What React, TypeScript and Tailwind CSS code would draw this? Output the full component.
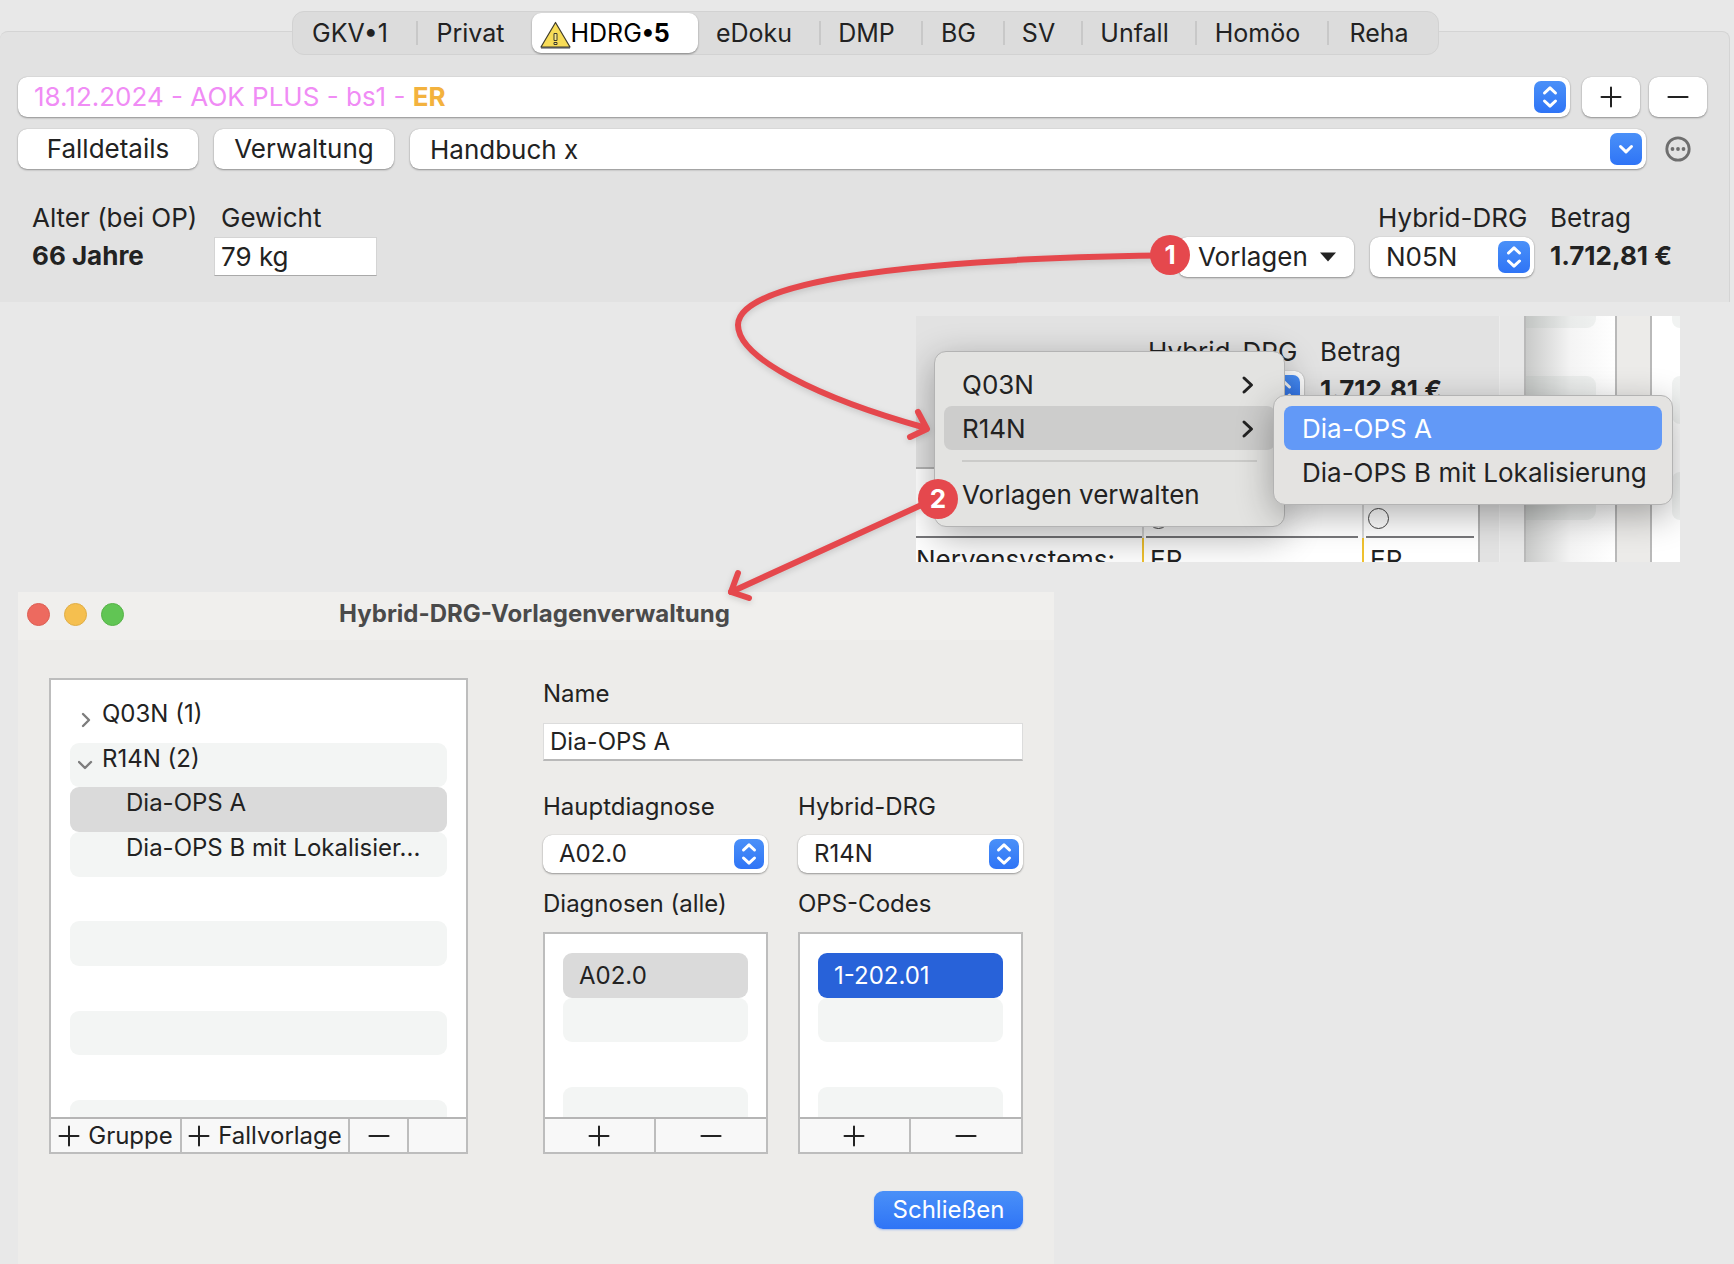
import React, { useId, useState } from 'react';
import clsx from 'clsx';

const TABS = [
  { id: 'gkv', label: 'GKV•1', width: 'w-[125px]' },
  { id: 'privat', label: 'Privat', width: 'w-[114px]' },
  { id: 'hdrg', label: 'HDRG', count: '5', width: 'w-[166px]' },
  { id: 'edoku', label: 'eDoku', width: 'w-[123px]' },
  { id: 'dmp', label: 'DMP', width: 'w-[102px]' },
  { id: 'bg', label: 'BG', width: 'w-[82px]' },
  { id: 'sv', label: 'SV', width: 'w-[78px]' },
  { id: 'unfall', label: 'Unfall', width: 'w-[114px]' },
  { id: 'homoeo', label: 'Homöo', width: 'w-[132px]' },
  { id: 'reha', label: 'Reha', width: 'w-[109px]' },
];

const CONTROL = 'rounded-[9px] bg-white shadow-[0_1px_2px_rgba(0,0,0,0.35),0_0_1px_rgba(0,0,0,0.25)]';

function UpDownIcon({ className }: { className?: string }) {
  return (
    <span
      className={clsx(
        'pointer-events-none absolute flex items-center justify-center rounded-[7px] bg-linear-to-b from-[#4a90f8] to-[#2f74f6] text-white',
        className
      )}
    >
      <svg width="16" height="24" viewBox="0 0 16 24" fill="none" stroke="currentColor" strokeWidth="3" strokeLinecap="round" strokeLinejoin="round">
        <path d="M2.500 8 8 2.800l5.500 5.200M2.500 16 8 21.200l5.500-5.200" />
      </svg>
    </span>
  );
}

function PlusIcon() {
  return (
    <svg width="22" height="22" viewBox="0 0 22 22" stroke="currentColor" strokeWidth="2" strokeLinecap="round" aria-hidden="true">
      <path d="M11 1.500v19M1.500 11h19" />
    </svg>
  );
}

function MinusIcon() {
  return (
    <svg width="22" height="22" viewBox="0 0 22 22" stroke="currentColor" strokeWidth="2.200" strokeLinecap="round" aria-hidden="true">
      <path d="M1.500 11h19" />
    </svg>
  );
}

function WarningIcon() {
  return (
    <svg width="31" height="28" viewBox="0 0 31 28" className="mt-1 shrink-0" aria-hidden="true">
      <path d="M15.500 1.500 30 26H1Z" fill="#f8dc57" stroke="#3f3c2c" strokeWidth="1.200" strokeLinejoin="round" />
      <path d="M1 26.800h29" stroke="#555" strokeWidth="1.500" />
      <path d="M14 12.500h3v7h-3ZM14 21.500h3v2h-3Z" fill="#fbe98c" stroke="#3f3c2c" strokeWidth="1" />
    </svg>
  );
}

function MenuChevron() {
  return (
    <svg width="14" height="22" viewBox="0 0 14 22" fill="none" stroke="currentColor" strokeWidth="3" strokeLinecap="round" strokeLinejoin="round" aria-hidden="true">
      <path d="M3 4l7.500 7L3 18" />
    </svg>
  );
}

// Hybrid-DRG select next to the resulting amount
function DrgFields({ className }: { className?: string }) {
  const id = useId();
  return (
    <div className={clsx('flex', className)}>
      <div className="w-[164px] shrink-0">
        <label htmlFor={id} className="mb-1 block pl-2 whitespace-nowrap">
          Hybrid-DRG
        </label>
        <div className="relative">
          <select id={id} className={clsx('h-10 w-full appearance-none pl-4', CONTROL)}>
            <option>N05N</option>
          </select>
          <UpDownIcon className="top-1 right-1 h-8 w-8" />
        </div>
      </div>
      <div className="w-[173px] shrink-0 pl-4">
        <div className="mb-1">Betrag</div>
        <div className="leading-[38px] font-bold whitespace-nowrap">1.712,81 €</div>
      </div>
    </div>
  );
}

function CasePanel() {
  const [active, setActive] = useState('hdrg');

  return (
    <section className="mr-1 pt-[11px]">
      <div
        role="tablist"
        className="relative z-10 mx-auto flex h-11 w-fit items-center rounded-xl border border-[#d2d2d2] bg-[#dcdcdc] text-[25px]"
      >
        {TABS.map((tab, i) => {
          const selected = tab.id === active;
          const divider = i < TABS.length - 1 && !selected && TABS[i + 1].id !== active;
          return (
            <button
              key={tab.id}
              type="button"
              role="tab"
              aria-selected={selected}
              onClick={() => setActive(tab.id)}
              className={clsx(
                'flex items-center',
                tab.width,
                selected
                  ? 'h-10 rounded-[9px] bg-white pl-2 text-black shadow-[0_1px_2px_rgba(0,0,0,0.4)]'
                  : 'h-6 justify-center pr-2',
                divider && 'border-r-2 border-[#c8c8c8]'
              )}
            >
              {tab.id === 'hdrg' && <WarningIcon />}
              {tab.label}
              {tab.count && <b>•{tab.count}</b>}
            </button>
          );
        })}
      </div>

      <div className="-mt-6 rounded-t-lg border-t border-r border-[#d4d4d4] bg-[#e2e2e2] pt-[45px] pr-[22px] pb-[25px] pl-[18px]">
        <div className="flex">
          <div className="relative flex-1">
            <select aria-label="Fall" className={clsx('h-10 w-full appearance-none text-transparent', CONTROL)}>
              <option>18.12.2024 - AOK PLUS - bs1 - ER</option>
            </select>
            <span aria-hidden="true" className="pointer-events-none absolute inset-y-0 left-4 leading-10 text-[#f08cf5]">
              18.12.2024 - AOK PLUS - bs1 - <b className="text-[#f3b23e]">ER</b>
            </span>
            <UpDownIcon className="top-1 right-1 h-8 w-8" />
          </div>
          <button type="button" aria-label="Hinzufügen" className={clsx('ml-3 flex h-10 w-[58px] items-center justify-center', CONTROL)}>
            <PlusIcon />
          </button>
          <button type="button" aria-label="Entfernen" className={clsx('ml-[9px] flex h-10 w-[58px] items-center justify-center', CONTROL)}>
            <MinusIcon />
          </button>
        </div>

        <div className="mt-3 flex items-center">
          <button type="button" className={clsx('h-10 w-[180px]', CONTROL)}>
            Falldetails
          </button>
          <button type="button" className={clsx('ml-4 h-10 w-[180px]', CONTROL)}>
            Verwaltung
          </button>
          <div className="relative ml-4 flex-1">
            <input aria-label="Fallname" defaultValue="Handbuch x" className={clsx('h-10 w-full pl-5 outline-none', CONTROL)} />
            <button
              type="button"
              aria-label="Auswahl öffnen"
              className="absolute top-1 right-1 flex h-8 w-8 items-center justify-center rounded-[7px] bg-linear-to-b from-[#4a90f8] to-[#2f74f6] text-white"
            >
              <svg width="16" height="12" viewBox="0 0 16 12" fill="none" stroke="currentColor" strokeWidth="3" strokeLinecap="round" strokeLinejoin="round">
                <path d="M2.500 3.500 8 8.800l5.500-5.300" />
              </svg>
            </button>
          </div>
          <button type="button" aria-label="Mehr" className="mr-4 ml-[19px] text-[#6e6e6e]">
            <svg width="26" height="26" viewBox="0 0 26 26" fill="currentColor">
              <circle cx="13" cy="13" r="11.200" fill="none" stroke="currentColor" strokeWidth="2.800" />
              <circle cx="7.500" cy="13" r="1.900" />
              <circle cx="13" cy="13" r="1.900" />
              <circle cx="18.500" cy="13" r="1.900" />
            </svg>
          </button>
        </div>

        <div className="mt-[34px] flex pl-[14px]">
          <div className="w-[182px]">
            <div className="mb-1 whitespace-nowrap">Alter (bei OP)</div>
            <div className="leading-[38px] font-bold">66 Jahre</div>
          </div>
          <div>
            <label htmlFor="gewicht" className="mb-1 block pl-[7px]">
              Gewicht
            </label>
            <input
              id="gewicht"
              defaultValue="79 kg"
              className="h-[39px] w-[163px] border border-b-[#a9a9a9] border-[#d4d4d4] bg-white pl-1.5 outline-none"
            />
          </div>
          <button
            type="button"
            aria-haspopup="menu"
            className={clsx('mt-[34px] ml-auto flex h-10 w-[176px] items-center pl-5', CONTROL)}
          >
            Vorlagen
            <svg width="16" height="10" viewBox="0 0 16 10" className="ml-3 fill-[#222]" aria-hidden="true">
              <path d="M0 .5h16L8 9.500Z" />
            </svg>
          </button>
          <DrgFields className="ml-4" />
        </div>
      </div>
    </section>
  );
}

function MenuSnippet() {
  return (
    <section className="relative mt-[14px] mr-[54px] ml-auto flex h-[246px] w-[764px] overflow-hidden">
      <div className="w-[584px] border-r border-[#ececec] bg-[#e2e2e2]">
        <div className="flex h-[151px] pt-[21px] pl-[224px]">
          <DrgFields />
        </div>
        <div className="grid w-[564px] grid-cols-[226px_220px_116px] border-t-2 border-r-2 border-[#b4b4b4] bg-white">
          <div className="h-[69px] border-b-2 border-[#77777a]" />
          <div className="h-[69px] border-l-2 border-[#d8d8d8]">
            <div className="mr-1 ml-0.5 h-full border-b-2 border-[#77777a] pt-[39px] pl-0.5">
              <input type="radio" name="er" aria-label="ER 1" className="block size-[21px] appearance-none rounded-full border border-[#444]" />
            </div>
          </div>
          <div className="h-[69px] border-l-2 border-[#d8d8d8]">
            <div className="mr-1 ml-0.5 h-full border-b-2 border-[#77777a] pt-[39px] pl-0.5">
              <input type="radio" name="er" aria-label="ER 2" className="block size-[21px] appearance-none rounded-full border border-[#444]" />
            </div>
          </div>
          <div className="h-8 pt-[7px]">Nervensystems:</div>
          <div className="h-8 border-l-2 border-[#efc12f] pt-[7px] pl-1.5">ER</div>
          <div className="h-8 border-l-2 border-[#efc12f] pt-[7px] pl-1.5">ER</div>
        </div>
      </div>
      <div className="w-6 bg-[#e7e7e7]" />
      <div className="flex w-[93px] flex-col gap-12 border-x-2 border-[#b9b9b9] bg-linear-to-r from-[#c9cac9] via-[#f4f4f4] to-white">
        <div className="h-3 w-[70px] rounded-br-[9px] bg-[#8b9b96]/10" />
        <div className="h-12 w-[70px] rounded-r-[9px] bg-[#8b9b96]/10" />
        <div className="h-12 w-[70px] rounded-r-[9px] bg-[#8b9b96]/10" />
      </div>
      <div className="w-[33px] bg-[#ecebe9]" />
      <div className="flex flex-1 flex-col items-end gap-12 border-l-2 border-[#b9b9b9] bg-white">
        <div className="h-3 w-2 rounded-bl-lg bg-[#f1f3f2]" />
        <div className="h-12 w-2 rounded-l-lg bg-[#f1f3f2]" />
        <div className="h-12 w-2 rounded-l-lg bg-[#f1f3f2]" />
      </div>

      <div
        role="menu"
        aria-label="Vorlagen"
        className="absolute top-[35px] left-[18px] w-[351px] rounded-xl border border-[#b3b3b3] bg-[#e3e3e1] px-[9px] py-[10px] shadow-[0_10px_36px_rgba(0,0,0,0.32)]"
      >
        <button type="button" role="menuitem" className="flex h-11 w-full items-center justify-between pt-0.5 pr-5 pl-[18px]">
          Q03N
          <MenuChevron />
        </button>
        <button type="button" role="menuitem" className="flex h-11 w-full items-center justify-between rounded-lg bg-[#cdcdcc] pt-0.5 pr-5 pl-[18px]">
          R14N
          <MenuChevron />
        </button>
        <div className="mx-[18px] my-[10px] h-0.5 bg-[#cbcbc9]" />
        <button type="button" role="menuitem" className="flex h-11 w-full items-center pt-0.5 pl-[18px] whitespace-nowrap">
          Vorlagen verwalten
        </button>
      </div>
      <div
        role="menu"
        aria-label="R14N"
        className="absolute top-[79px] left-[357px] w-[400px] rounded-xl border border-[#b3b3b3] bg-[#e4e3e1] px-[10px] py-[10px] shadow-[0_10px_36px_rgba(0,0,0,0.32)]"
      >
        <button type="button" role="menuitem" className="flex h-11 w-full items-center rounded-lg bg-[#6299f7] pt-0.5 pl-[18px] text-white">
          Dia-OPS A
        </button>
        <button type="button" role="menuitem" className="flex h-11 w-full items-center pt-0.5 pl-[18px] whitespace-nowrap">
          Dia-OPS B mit Lokalisierung
        </button>
      </div>
    </section>
  );
}

function DialogSelect({ label, value }: { label: string; value: string }) {
  const id = useId();
  return (
    <div>
      <label htmlFor={id} className="block">
        {label}
      </label>
      <div className="relative mt-[14px]">
        <select id={id} className={clsx('h-[38px] w-full appearance-none pl-4', CONTROL)}>
          <option>{value}</option>
        </select>
        <UpDownIcon className="top-1 right-1 h-[30px] w-[30px]" />
      </div>
    </div>
  );
}

interface CodeListProps {
  label: string;
  code: string;
  focused?: boolean;
}

function CodeList({ label, code, focused }: CodeListProps) {
  return (
    <div>
      <div>{label}</div>
      <div className="mt-[14px] border-2 border-[#bdbdbd] bg-white">
        <ul className="grid h-[183px] grid-rows-[19px_repeat(3,minmax(0,1fr))_30px] px-[18px]">
          <li />
          <li className={clsx('rounded-[9px] pl-4 leading-[46px]', focused ? 'bg-[#2862d9] text-white' : 'bg-[#dadada]')}>{code}</li>
          <li className="rounded-[9px] bg-[#f3f5f4]" />
          <li />
          <li className="rounded-t-[9px] bg-[#f3f5f4]" />
        </ul>
        <div className="grid h-[35px] grid-cols-2 border-t-2 border-[#b5b5b5] bg-[#f8f8f8]">
          <button type="button" aria-label={label + ' hinzufügen'} className="flex items-center justify-center border-r-2 border-[#bdbdbd]">
            <PlusIcon />
          </button>
          <button type="button" aria-label={label + ' entfernen'} className="flex items-center justify-center">
            <MinusIcon />
          </button>
        </div>
      </div>
    </div>
  );
}

function TemplateTree() {
  return (
    <div className="w-[419px] border-2 border-[#bdbdbd] bg-white">
      <ul className="grid h-[437px] grid-rows-[18px_repeat(9,minmax(0,1fr))_17px] px-[19px]">
        <li />
        <li className="flex gap-2 pl-2">
          <svg width="16" height="16" viewBox="0 0 16 16" fill="none" stroke="#7d7d7d" strokeWidth="2.400" strokeLinecap="round" strokeLinejoin="round" className="mt-[14px]">
            <path d="M5 2l6 6-6 6" />
          </svg>
          <span className="leading-8">Q03N (1)</span>
        </li>
        <li className="flex gap-2 rounded-[9px] bg-[#f3f5f4] pl-2">
          <svg width="16" height="16" viewBox="0 0 16 16" fill="none" stroke="#7d7d7d" strokeWidth="2.400" strokeLinecap="round" strokeLinejoin="round" className="mt-[14px]">
            <path d="M1 5l6 6 6-6" />
          </svg>
          <span className="leading-8">R14N (2)</span>
        </li>
        <li className="rounded-[9px] bg-[#dadada] pl-14 leading-8">Dia-OPS A</li>
        <li className="rounded-[9px] bg-[#f3f5f4] pl-14 leading-8 whitespace-nowrap">Dia-OPS B mit Lokalisier...</li>
        <li />
        <li className="rounded-[9px] bg-[#f3f5f4]" />
        <li />
        <li className="rounded-[9px] bg-[#f3f5f4]" />
        <li />
        <li className="rounded-t-[9px] bg-[#f3f5f4]" />
      </ul>
      <div className="grid h-[35px] grid-cols-[131px_168px_59px_1fr] border-t-2 border-[#b5b5b5] bg-[#f8f8f8]">
        <button type="button" className="flex items-center justify-center gap-2 border-r-2 border-[#bdbdbd]">
          <PlusIcon />
          Gruppe
        </button>
        <button type="button" className="flex items-center justify-center gap-2 border-r-2 border-[#bdbdbd]">
          <PlusIcon />
          Fallvorlage
        </button>
        <button type="button" aria-label="Entfernen" className="flex items-center justify-center border-r-2 border-[#bdbdbd]">
          <MinusIcon />
        </button>
      </div>
    </div>
  );
}

function TemplateDialog() {
  return (
    <section
      role="dialog"
      aria-labelledby="dialog-title"
      className="mt-[30px] ml-[18px] w-[1036px] bg-[#edecea] pb-[35px] text-[24px] leading-7"
    >
      <header className="grid h-12 grid-cols-[1fr_auto_1fr] items-center bg-[#f0efed] pr-3 pb-1 pl-[9px]">
        <div className="flex gap-[14px]">
          <span className="size-[23px] rounded-full border border-[#dd5f54] bg-[#ed6a5f]" />
          <span className="size-[23px] rounded-full border border-[#e0ae46] bg-[#f5bf4f]" />
          <span className="size-[23px] rounded-full border border-[#56b347] bg-[#61c554]" />
        </div>
        <h2 id="dialog-title" className="font-bold text-[#4a4a4a]">
          Hybrid-DRG-Vorlagenverwaltung
        </h2>
      </header>

      <div className="flex justify-between pt-[38px] pr-[31px] pl-[31px]">
        <TemplateTree />
        <div className="w-[480px] pt-[2px]">
          <label htmlFor="vorlage-name" className="block">
            Name
          </label>
          <input
            id="vorlage-name"
            defaultValue="Dia-OPS A"
            className="mt-[15px] h-[38px] w-full border border-b-2 border-b-[#b9b9b9] border-[#dcdcdc] bg-white pl-1.5 outline-none"
          />
          <div className="mt-8 grid grid-cols-2 gap-x-[30px] gap-y-[17px]">
            <DialogSelect label="Hauptdiagnose" value="A02.0" />
            <DialogSelect label="Hybrid-DRG" value="R14N" />
            <CodeList label="Diagnosen (alle)" code="A02.0" />
            <CodeList label="OPS-Codes" code="1-202.01" focused />
          </div>
        </div>
      </div>

      <div className="mt-[37px] flex justify-end pr-[31px]">
        <button
          type="button"
          className="h-[38px] w-[149px] rounded-[9px] bg-linear-to-b from-[#4a90f8] to-[#2f74f6] text-white shadow-[0_1px_2px_rgba(47,116,246,0.4)]"
        >
          Schließen
        </button>
      </div>
    </section>
  );
}

// Numbered arrows drawn over the windows
function Annotations() {
  return (
    <div className="pointer-events-none absolute top-0 left-0">
      <svg
        width="1200"
        height="620"
        viewBox="0 0 1200 620"
        fill="none"
        stroke="#e5484d"
        strokeWidth="6"
        strokeLinecap="round"
        strokeLinejoin="round"
        className="drop-shadow-[0_2px_3px_rgba(0,0,0,0.15)]"
        aria-hidden="true"
      >
        <path d="M1160 255.500C900 259 738 283 738 325C738 358 818 398 926 428" />
        <path d="M918 412L927 429L910 437" />
        <path d="M928 502L731 592" />
        <path d="M738 573L731 592L749 598" />
      </svg>
      <span className="absolute top-[235px] left-[1150px] flex size-10 items-center justify-center rounded-full bg-[#e5484d] font-bold text-white">
        1
      </span>
      <span className="absolute top-[479px] left-[918px] flex size-10 items-center justify-center rounded-full bg-[#e5484d] font-bold text-white">
        2
      </span>
    </div>
  );
}

export default function App() {
  return (
    <main className="relative min-h-screen overflow-hidden bg-[#e8e8e8] font-[Inter,'Liberation_Sans',sans-serif] text-[26px] leading-[30px] text-[#222]">
      <CasePanel />
      <MenuSnippet />
      <TemplateDialog />
      <Annotations />
    </main>
  );
}
